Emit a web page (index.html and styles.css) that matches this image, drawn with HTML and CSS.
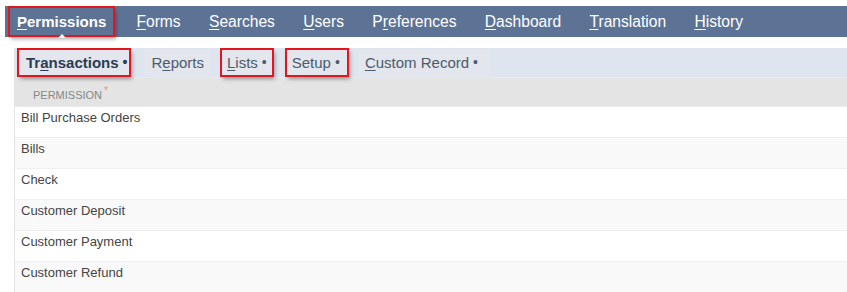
FILE: index.html
```html
<!DOCTYPE html>
<html>
<head>
  <title>Role Permissions</title>
  <link rel="stylesheet" href="styles.css">
</head>
<body>
  <div class="page">
    <div class="main-tabs">
      <a class="main-tab active marked"><u>P</u>ermissions</a>
      <a class="main-tab"><u>F</u>orms</a>
      <a class="main-tab"><u>S</u>earches</a>
      <a class="main-tab"><u>U</u>sers</a>
      <a class="main-tab">P<u>r</u>eferences</a>
      <a class="main-tab"><u>D</u>ashboard</a>
      <a class="main-tab"><u>T</u>ranslation</a>
      <a class="main-tab"><u>H</u>istory</a>
    </div>

    <div class="panel">
      <div class="sub-tabs">
        <a class="sub-tab active marked">Tr<u>a</u>nsactions<span class="dot">•</span></a>
        <a class="sub-tab">R<u>e</u>ports</a>
        <a class="sub-tab marked"><u>L</u>ists<span class="dot">•</span></a>
        <a class="sub-tab marked">Setup<span class="dot">•</span></a>
        <a class="sub-tab"><u>C</u>ustom Record<span class="dot">•</span></a>
      </div>

      <table>
        <thead>
          <tr>
            <th>Permission<span class="req">*</span></th>
          </tr>
        </thead>
        <tbody>
          <tr><td>Bill Purchase Orders</td></tr>
          <tr><td>Bills</td></tr>
          <tr><td>Check</td></tr>
          <tr><td>Customer Deposit</td></tr>
          <tr><td>Customer Payment</td></tr>
          <tr><td>Customer Refund</td></tr>
        </tbody>
      </table>
    </div>
  </div>
</body>
</html>
```

FILE: styles.css
```css
body {
  margin: 0;
  font-family: "Liberation Sans", Arial, sans-serif;
  background-color: #fff;
  overflow: hidden;
}

a u {
  text-decoration: underline;
  text-underline-offset: 2px;
}

.page {
  padding: 6px 0 0 5px;
}

.main-tabs {
  display: flex;
  align-items: center;
  height: 31px;
  background-color: #5d7396;
  padding-left: 4px;
}

.main-tab {
  position: relative;
  color: #fff;
  font-size: 15.6px;
  padding: 0 14.2px;
  line-height: 29px;
}

.main-tab.active {
  font-size: 15px;
  font-weight: bold;
  padding: 0 8px;
  margin-right: 8px;
}

.main-tab.active::after {
  content: '';
  position: absolute;
  left: 50%;
  bottom: -2px;
  margin-left: -4px;
  border: 4px solid transparent;
  border-bottom-color: #fff;
}

.marked {
  outline: 2px solid #e3161d;
  outline-offset: -1px;
  box-shadow: 2px 3px 4px rgba(0, 0, 0, 0.35);
}

.panel {
  margin: 11px 0 0 9px;
  border-left: 1px solid #e3e3e3;
}

.sub-tabs {
  display: flex;
  align-items: center;
  height: 29px;
  background-color: #dfe5ef;
  border-bottom: 1px solid #e9e9e9;
}

.sub-tab {
  color: #4d5a6d;
  font-size: 15px;
  line-height: 27px;
  padding: 0 6px;
  margin-right: 12px;
  background-color: #e3e6ec;
}

.sub-tab:first-child {
  margin-left: 3px;
}

.sub-tab:nth-child(2) {
  margin-right: 11px;
}

.sub-tab:nth-child(3) {
  margin-right: 13px;
}

.sub-tab:nth-child(4) {
  padding-right: 8px;
  margin-right: 11px;
}

.sub-tab.active {
  color: #2b3c55;
  font-weight: bold;
  padding: 0 3px 0 8px;
  margin-right: 15px;
}

.sub-tab:last-child {
  padding-right: 12px;
  margin-right: 0;
}

.dot {
  margin-left: 4px;
  font-size: 14px;
  vertical-align: 1px;
}

table {
  border-collapse: collapse;
  width: 100%;
}

th {
  background-color: #e4e4e4;
  color: #888;
  font-size: 11px;
  font-weight: normal;
  text-transform: uppercase;
  text-align: left;
  height: 28px;
  padding: 0 0 0 18px;
  border-bottom: 1px solid #ececec;
}

.req {
  color: #f0a23a;
  margin-left: 2px;
  vertical-align: 5px;
  font-size: 11px;
}

td {
  color: #444;
  font-size: 13px;
  line-height: 14px;
  padding: 4px 0 12px 6px;
  border-top: 1px solid #f0f0f0;
}

tbody tr:nth-child(even) td {
  background-color: #f9f9f9;
}
```
